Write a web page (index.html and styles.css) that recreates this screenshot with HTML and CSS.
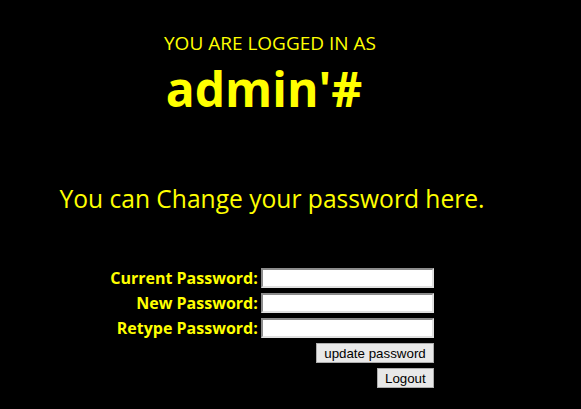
FILE: index.html
```html
<!DOCTYPE html>
<html lang="en">

<head>
    <meta charset="UTF-8">
    <title>Change password</title>
    <link rel="stylesheet" href="styles.css">
</head>

<body>
    <div class="container">
        <div class="logged-in">
            <p class="logged-label">YOU ARE LOGGED IN AS</p>
            <p class="username">admin'#</p>
        </div>

        <p class="change-text">You can Change your password here.</p>

        <form class="password-form">
            <label for="current">Current Password:</label>
            <input type="password" id="current" name="current">
            <label for="new">New Password:</label>
            <input type="password" id="new" name="new">
            <label for="retype">Retype Password:</label>
            <input type="password" id="retype" name="retype">
            <button class="form-button" type="submit">update password</button>
            <button class="form-button" type="button">Logout</button>
        </form>
    </div>
</body>

</html>
```

FILE: styles.css
```css
body {
    margin: 0;
    background-color: #000;
    color: #ffff00;
    font-family: 'Open Sans', Arial, Helvetica, sans-serif;
}

.container {
    width: 540px;
    display: flex;
    flex-direction: column;
    align-items: center;
}

.logged-in {
    margin-top: 30px;
    text-align: center;
}

.logged-in p {
    margin: 0;
}

.logged-label {
    font-size: 19px;
}

.username {
    padding-right: 12px;
    font-size: 48px;
    font-weight: bold;
}

.change-text {
    margin: 61px 0 0 4px;
    font-size: 24.6px;
}

.password-form {
    margin-top: 53px;
    margin-left: 4px;
    display: grid;
    grid-template-columns: auto 173px;
    column-gap: 3px;
    row-gap: 5px;
    align-items: center;
}

.password-form label {
    text-align: right;
    font-weight: bold;
    font-size: 16px;
    line-height: 20px;
}

.password-form input {
    box-sizing: border-box;
    height: 20px;
    margin: 0;
    border: 2px inset #e0e0e0;
    background: #fff;
}

.form-button {
    grid-column: 2;
    justify-self: end;
    height: 20px;
    padding: 0 7px;
    font-family: Arial, Helvetica, sans-serif;
    font-size: 13.33px;
    color: #000;
    background-color: #e8e8e8;
    border: 1px solid #adadad;
}
```
